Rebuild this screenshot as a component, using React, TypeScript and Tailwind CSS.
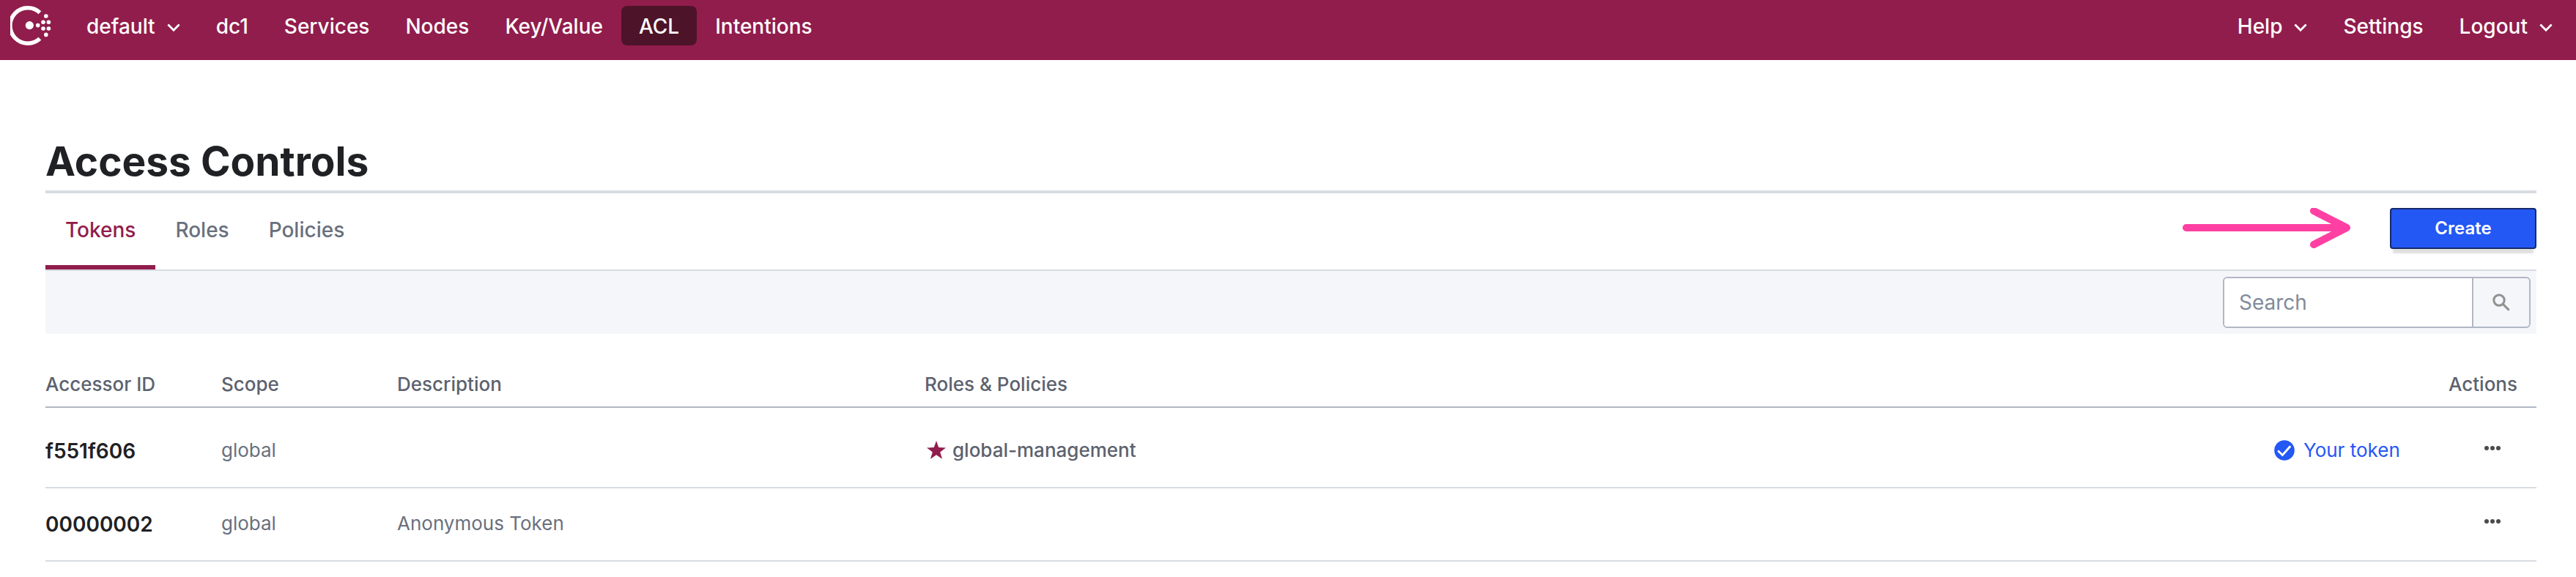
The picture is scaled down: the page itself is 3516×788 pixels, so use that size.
import React from "react";

function ConsulLogo() {
  return (
    <svg viewBox="0 0 56 54" className="h-[54px] w-14" role="img" aria-label="Consul">
      <path d="M40.4 9.2A24.2 24.2 0 1 0 40.4 44.8" fill="none" stroke="#fff" strokeWidth="5.6" />
      <g fill="#fff">
        <circle cx="26.3" cy="26.6" r="5.6" />
        <circle cx="37.7" cy="26.6" r="2.8" />
        <circle cx="45" cy="22.3" r="2.8" />
        <circle cx="52.4" cy="22.3" r="2.8" />
        <circle cx="45" cy="31" r="2.8" />
        <circle cx="52.4" cy="31" r="2.8" />
        <circle cx="48.8" cy="14" r="2.8" />
        <circle cx="48.8" cy="39.4" r="2.8" />
      </g>
    </svg>
  );
}

function Chevron() {
  return (
    <svg viewBox="0 0 18 12" className="mt-1 h-3 w-[18px]" fill="none" stroke="currentColor" strokeWidth="2.8" aria-hidden="true">
      <path d="M1.4 1.6 9 9.2l7.6-7.6" />
    </svg>
  );
}

const itemClass = "flex h-[54px] items-center rounded-lg px-6 pt-0.5 whitespace-nowrap";

function NavLink({ label, active = false }: { label: string; active?: boolean }) {
  return (
    <li>
      <a href="#" aria-current={active ? "page" : undefined} className={active ? itemClass + " bg-[#4d1429]" : itemClass}>
        {label}
      </a>
    </li>
  );
}

function NavMenu({ label }: { label: string }) {
  return (
    <li>
      <button type="button" className={itemClass + " gap-4"}>
        {label}
        <Chevron />
      </button>
    </li>
  );
}

function Header() {
  return (
    <header className="flex h-[82px] items-start justify-between bg-[#911d4c] px-2 pt-2 text-[28px] leading-8 font-medium text-white">
      <nav aria-label="Main" className="flex">
        <a href="#" className="mr-6 ml-1.5 block">
          <ConsulLogo />
        </a>
        <ul className="flex gap-px">
          <NavMenu label="default" />
          <NavLink label="dc1" />
          <NavLink label="Services" />
          <NavLink label="Nodes" />
          <NavLink label="Key/Value" />
          <NavLink label="ACL" active />
          <NavLink label="Intentions" />
        </ul>
      </nav>
      <nav aria-label="Account">
        <ul className="flex gap-px">
          <NavMenu label="Help" />
          <NavLink label="Settings" />
          <NavMenu label="Logout" />
        </ul>
      </nav>
    </header>
  );
}

function Arrow() {
  return (
    <svg viewBox="0 0 230 56" className="mr-[53px] h-14 w-[230px]" fill="none" stroke="#ff40a2" strokeWidth="10" strokeLinecap="round" strokeLinejoin="round" aria-hidden="true">
      <path d="M5 27h219M179 4l45 23-45 23" />
    </svg>
  );
}

function Tab({ label, active = false }: { label: string; active?: boolean }) {
  return (
    <li>
      <a
        href="#"
        className={
          active
            ? "block h-[104px] border-b-6 border-[#911d4c] px-[27px] pt-[30px] text-[#911d4c]"
            : "block h-[104px] px-[27px] pt-[30px]"
        }
      >
        {label}
      </a>
    </li>
  );
}

function Toolbar() {
  return (
    <form role="search" className="flex h-[86px] justify-end bg-[#f5f6f9] px-2 py-2">
      <div className="flex h-[70px] w-[420px] overflow-hidden rounded-md border-2 border-[#b1b7c5]">
        <input
          type="search"
          aria-label="Search"
          placeholder="Search"
          className="min-w-0 flex-1 bg-white px-5 text-[28px] outline-none placeholder:text-[#828b9a]"
        />
        <button type="submit" aria-label="Search" className="flex w-[78px] items-center justify-center border-l-2 border-[#b1b7c5]">
          <svg viewBox="0 0 24 24" className="size-6" fill="none" stroke="#919191" strokeWidth="3" aria-hidden="true">
            <circle cx="9" cy="9" r="7.2" />
            <path d="M14.4 14.4l8.2 8.2" />
          </svg>
        </button>
      </div>
    </form>
  );
}

type Token = { id: string; scope: string; description: string; policy?: string; own?: boolean };

const tokens: Token[] = [
  { id: "f551f606", scope: "global", description: "", policy: "global-management", own: true },
  { id: "00000002", scope: "global", description: "Anonymous Token" },
];

const cell = "group-first:pt-2.5";

function TokenTable() {
  return (
    <table className="w-full table-fixed text-left text-[26px] leading-8 text-[#69707d]">
      <colgroup>
        <col className="w-60" />
        <col className="w-60" />
        <col className="w-[720px]" />
        <col />
        <col className="w-60" />
        <col className="w-[120px]" />
      </colgroup>
      <thead>
        <tr className="h-[100px] border-b-2 border-[#b1b7c5] align-bottom text-[#5c626e]">
          <th className="pb-3.5 font-medium">Accessor ID</th>
          <th className="pb-3.5 font-medium">Scope</th>
          <th className="pb-3.5 font-medium">Description</th>
          <th className="pb-3.5 font-medium" colSpan={2}>
            Roles &amp; Policies
          </th>
          <th className="pb-3.5 font-medium">Actions</th>
        </tr>
      </thead>
      <tbody>
        {tokens.map((t) => (
          <tr key={t.id} className="group h-[100px] border-b-2 border-[#d8dce2] first:h-[110px]">
            <th scope="row" className={cell + " text-[28px] font-semibold text-[#1f2124]"}>
              <a href="#">{t.id}</a>
            </th>
            <td className={cell + " pb-0.5"}>{t.scope}</td>
            <td className={cell + " pb-0.5"}>{t.description}</td>
            <td className={cell + " pb-0.5 font-medium text-[#5c626e]"}>
              {t.policy && (
                <span className="flex items-center gap-2 pl-0.5">
                  <svg viewBox="0 0 28 28" className="size-7" fill="#911d4c" aria-hidden="true">
                    <path d="M14 1l3.2 9.1 9.8.3-7.8 6 2.9 9.4L14 20.2l-8.1 5.6 2.9-9.4-7.8-6 9.8-.3z" />
                  </svg>
                  {t.policy}
                </span>
              )}
            </td>
            <td className={cell + " pb-0.5 text-[#2358f5]"}>
              {t.own && (
                <span className="flex items-center gap-3 pl-0.5">
                  <svg viewBox="0 0 28 28" className="size-7" aria-hidden="true">
                    <circle cx="14" cy="14" r="13.8" fill="currentColor" />
                    <path d="M5.2 14.4l6.2 6L22.2 8.2" fill="none" stroke="#fff" strokeWidth="2.8" />
                  </svg>
                  Your token
                </span>
              )}
            </td>
            <td className={cell + " pb-2"}>
              <button type="button" aria-label="Token actions" className="ml-12 block">
                <svg viewBox="0 0 24 6" className="h-1.5 w-6" fill="#4b4b4b" aria-hidden="true">
                  <circle cx="4" cy="3" r="3" />
                  <circle cx="12" cy="3" r="3" />
                  <circle cx="20" cy="3" r="3" />
                </svg>
              </button>
            </td>
          </tr>
        ))}
      </tbody>
    </table>
  );
}

export default function App() {
  return (
    <div className="min-h-screen bg-white font-['Inter','Liberation_Sans',sans-serif]">
      <Header />
      <main className="pr-[54px] pl-[62px] pt-[104px]">
        <h1 className="border-b-4 border-[#d8dce2] pb-1.5 text-[55px] leading-[68px] font-bold text-[#1f2124]">Access Controls</h1>
        <div className="flex justify-between border-b-2 border-[#d8dce2]">
          <nav aria-label="Access controls">
            <ul className="flex text-[28px] leading-10 font-medium text-[#69707d]">
              <Tab label="Tokens" active />
              <Tab label="Roles" />
              <Tab label="Policies" />
            </ul>
          </nav>
          <div className="flex pt-5">
            <Arrow />
            <button
              type="button"
              className="h-14 w-[200px] rounded-sm border-2 border-[#15296b] bg-[#2358f5] text-2xl font-semibold text-white shadow-[0_10px_2px_-4px_rgba(0,0,0,0.12)]"
            >
              Create
            </button>
          </div>
        </div>
        <Toolbar />
        <TokenTable />
      </main>
    </div>
  );
}
